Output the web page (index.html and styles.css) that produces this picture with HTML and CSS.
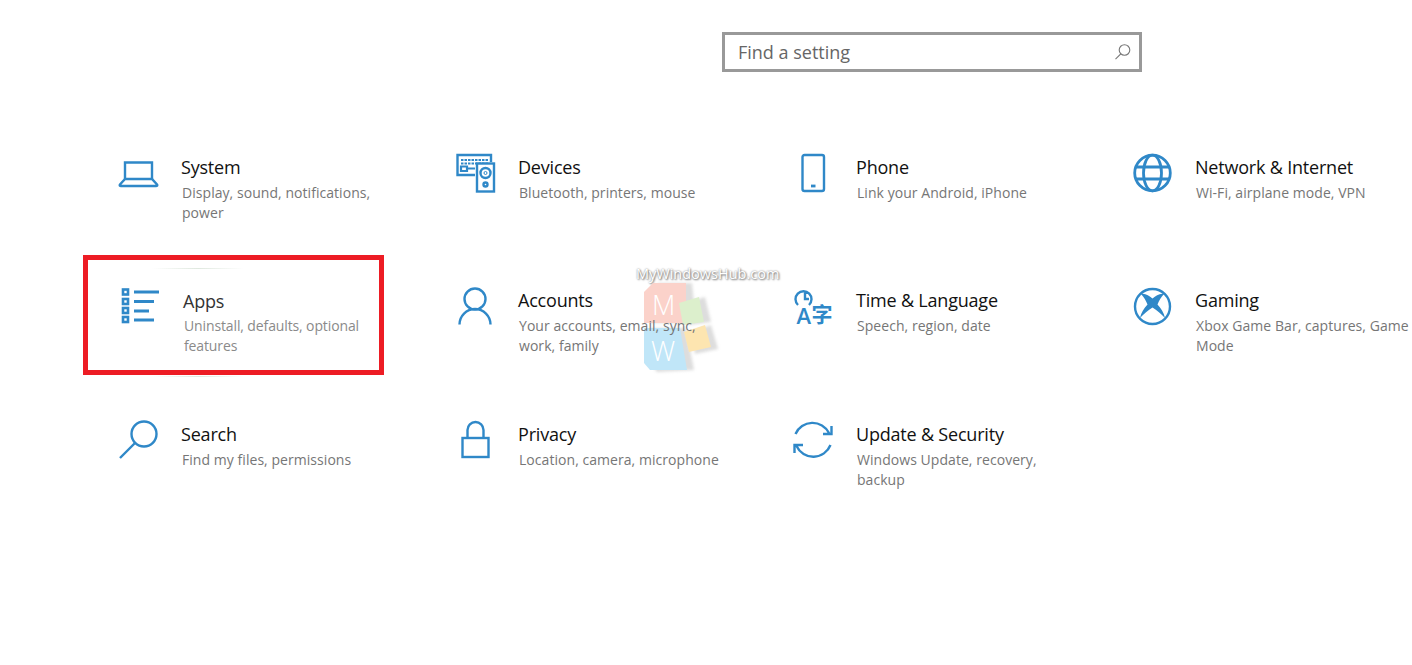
FILE: index.html
```html
<!DOCTYPE html>
<html lang="en">
<head>
<meta charset="utf-8">
<title>Settings</title>
<link rel="stylesheet" href="styles.css">
</head>
<body>
<div class="watermark">
  <span class="wm-text">MyWindowsHub.com</span>
  <svg class="wm-logo" width="90" height="110" viewBox="0 0 90 110">
    <g class="wm-shadow">
      <path d="M8 17 17 8H50L54 48H8Z"/>
      <path d="M8 53H44L52 95 15 97 8 88Z"/>
      <path d="M43 28 63 22 69 47 47 50Z"/>
      <path d="M48 57 69 50 76 74 53 79Z"/>
    </g>
    <path class="wm-red" d="M2 17 11 8H44V48H2Z"/>
    <path class="wm-blue" d="M2 53H38L45 95H8L2 88Z"/>
    <path class="wm-green" d="M37 28 57 22 62 47 41 50Z"/>
    <path class="wm-yellow" d="M42 57 63 50 69 72 47 77Z"/>
    <text class="wm-letter" x="10" y="40">M</text>
    <text class="wm-letter" x="9" y="86">W</text>
  </svg>
</div>
<header class="top">
  <div class="search">
    <span class="search-text">Find a setting</span>
    <svg class="search-icon" width="18" height="18" viewBox="0 0 18 18"><circle cx="10.5" cy="7" r="5.3"/><path d="M6.8 10.8 1.5 16.2"/></svg>
  </div>
</header>
<main class="grid">
  <section class="item">
    <svg class="icon" viewBox="0 0 40 40"><path d="M7 26V9.500H34V26"/><path d="M7 26 2 31.500Q1 33 3 33H38Q40 33 39 31.500L34 26Z"/></svg>
    <div class="text"><h2>System</h2><p>Display, sound, notifications,<br>power</p></div>
  </section>
  <section class="item">
    <svg class="icon" viewBox="0 0 40 40">
      <path d="M20 22H2.500V2H36V9"/>
      <path class="thin" d="M6 7H33M6 10.500H33"/>
      <path class="thin wide" d="M6 13.500H12V18H6ZM12 15.500H20"/>
      <rect x="22" y="10.500" width="17" height="28" fill="#fff"/>
      <circle cx="30.500" cy="20" r="5"/><circle class="fine" cx="30.500" cy="20" r="1.500"/><circle cx="30.500" cy="31.500" r="2"/>
    </svg>
    <div class="text"><h2>Devices</h2><p>Bluetooth, printers, mouse</p></div>
  </section>
  <section class="item">
    <svg class="icon" viewBox="0 0 40 40"><rect x="9.500" y="2" width="21.500" height="36" rx="2"/><path class="heavy" d="M18 33H22.500"/></svg>
    <div class="text"><h2>Phone</h2><p>Link your Android, iPhone</p></div>
  </section>
  <section class="item">
    <svg class="icon icon-bold" viewBox="0 0 40 40"><circle cx="20.500" cy="20" r="17.800"/><ellipse cx="20.500" cy="20" rx="9" ry="17.800"/><path d="M4 14H37M4 26H37"/></svg>
    <div class="text"><h2>Network &amp; Internet</h2><p>Wi-Fi, airplane mode, VPN</p></div>
  </section>

  <section class="item item-apps">
    <svg class="icon" viewBox="0 0 40 40">
      <g class="apps-boxes"><rect x="3" y="2.500" width="5" height="5"/><rect x="3" y="12" width="5" height="5"/><rect x="3" y="21" width="5" height="5"/><rect x="3" y="30" width="5" height="5"/></g>
      <path class="heavy" d="M14 5H39M14 14.500H34M14 24H29M14 33H34"/>
    </svg>
    <div class="text"><h2>Apps</h2><p>Uninstall, defaults, optional<br>features</p></div>
  </section>
  <section class="item item-lower">
    <svg class="icon" viewBox="0 0 40 40"><circle cx="20" cy="12" r="10.500"/><path d="M4.500 37.500A15.500 15.500 0 0 1 35.500 37.500"/></svg>
    <div class="text"><h2>Accounts</h2><p>Your accounts, email, sync,<br>work, family</p></div>
  </section>
  <section class="item item-lower">
    <svg class="icon" viewBox="0 0 40 40">
      <path d="M5 18A8 8 0 1 1 16 18M12 5V12H16"/>
      <text class="glyph" x="3.500" y="37">A</text>
      <text class="glyph glyph-cjk" x="18.500" y="35">字</text>
    </svg>
    <div class="text"><h2>Time &amp; Language</h2><p>Speech, region, date</p></div>
  </section>
  <section class="item item-lower">
    <svg class="icon" viewBox="0 0 40 40">
      <circle cx="20.500" cy="19.500" r="17.500"/>
      <path class="solid" d="M9 7C13 6 17 8.500 20.500 11.500 24 8.500 28 6 32 7 29 10 27 14 25.500 17.500 29 21 32 26 33 31 29 27 25 23 20.500 20.500 16 23 12 27 8 31 9 26 12 21 15.500 17.500 14 14 12 10 9 7Z"/>
    </svg>
    <div class="text"><h2>Gaming</h2><p>Xbox Game Bar, captures, Game<br>Mode</p></div>
  </section>

  <section class="item">
    <svg class="icon" viewBox="0 0 40 40"><circle cx="26" cy="14" r="12.500"/><path d="M17 23 2 38"/></svg>
    <div class="text"><h2>Search</h2><p>Find my files, permissions</p></div>
  </section>
  <section class="item">
    <svg class="icon" viewBox="0 0 40 40"><rect x="7.500" y="18" width="26" height="19"/><path d="M12.500 18V10A8 8 0 0 1 28.500 10V18"/></svg>
    <div class="text"><h2>Privacy</h2><p>Location, camera, microphone</p></div>
  </section>
  <section class="item">
    <svg class="icon" viewBox="0 0 40 40"><path d="M2.500 14A18.500 18.500 0 0 1 36 13M38.500 6V14H30M37.500 25A18.500 18.500 0 0 1 3.500 26M1.500 33V25H10"/></svg>
    <div class="text"><h2>Update &amp; Security</h2><p>Windows Update, recovery,<br>backup</p></div>
  </section>
</main>
<div class="highlight"></div>
</body>
</html>
```
FILE: styles.css
```css
* { box-sizing: border-box; }
html, body { margin: 0; padding: 0; background: #fff; }
body {
  width: 1412px;
  height: 665px;
  overflow: hidden;
  font-family: "Open Sans", "Noto Sans", sans-serif;
  position: relative;
}
.top { padding: 32px 0 0 722px; }
.search {
  width: 420px;
  height: 40px;
  border: 3px solid #999;
  display: flex;
  align-items: center;
  justify-content: space-between;
  padding: 0 7px 0 13px;
}
.search-text { font-size: 18px; color: #666; }
.search-icon { fill: none; stroke: #777; stroke-width: 1.1; }
.grid {
  position: relative;
  margin-top: 81px;
  padding-left: 118px;
  display: grid;
  grid-template-columns: 337px 338px 339px 280px;
  grid-template-rows: 133px 134px 134px;
}
.item { display: flex; gap: 23px; align-items: flex-start; }
.icon {
  width: 40px;
  height: 40px;
  flex: none;
  fill: none;
  stroke: #2f88c8;
  stroke-width: 2.4;
  overflow: visible;
}
.icon-bold { stroke-width: 2.8; }
.icon .heavy { stroke-width: 2.8; }
.icon .thin { stroke-width: 2.2; stroke-dasharray: 2.5 1; }
.icon .thin.wide { stroke-dasharray: none; }
.icon .fine { stroke-width: 1; }
.icon .solid { fill: #2f88c8; stroke: none; }
.icon .apps-boxes { fill: #fff; stroke-width: 2.6; }
.icon .glyph {
  fill: #2f88c8;
  stroke: none;
  font-family: "Open Sans", sans-serif;
  font-size: 22px;
  font-weight: 600;
}
.icon .glyph-cjk {
  font-family: "Noto Sans CJK SC", sans-serif;
  font-size: 21px;
  font-weight: 700;
}
.item-lower .icon { margin-top: 1px; }
.text { white-space: nowrap; }
h2 {
  margin: 0;
  font-size: 18px;
  line-height: 29px;
  font-weight: 400;
  letter-spacing: -0.2px;
  color: #111;
}
p {
  margin: 0;
  padding: 1px 0 0 1px;
  font-size: 14px;
  line-height: 20px;
  letter-spacing: 0.05px;
  color: #767676;
}
.item-apps { padding: 1px 0 0 2px; }
.item-apps h2 { color: #333; }
.item-apps .text p { padding-top: 0; letter-spacing: -0.12px; color: #8a8a8a; }
.highlight {
  position: absolute;
  left: 83px;
  top: 255px;
  width: 301px;
  height: 120px;
  border: 5px solid #ed1c24;
}
.highlight::before,
.highlight::after {
  content: "";
  position: absolute;
  left: 64px;
  width: 92px;
  height: 1px;
  background: linear-gradient(90deg, #fff, #dfe8df 50%, #fff);
}
.highlight::before { top: 8px; }
.highlight::after { top: 116px; }
.watermark {
  position: absolute;
  left: 636px;
  top: 264px;
  width: 150px;
}
.wm-text {
  display: block;
  font-size: 14.5px;
  line-height: 20px;
  color: #fff;
  text-shadow: 1px 1px 2px #777, 0 0 2px #888;
  white-space: nowrap;
}
.wm-logo { display: block; margin: -9px 0 0 6px; }
.wm-shadow { fill: #ddd; filter: blur(1.5px); }
.wm-red { fill: #fbd2ca; }
.wm-blue { fill: #c0e6f8; }
.wm-green { fill: #dcefcc; }
.wm-yellow { fill: #fde5b0; }
.wm-letter { fill: #fff; font-size: 27px; font-family: "Open Sans", sans-serif; font-weight: 300; }
```
